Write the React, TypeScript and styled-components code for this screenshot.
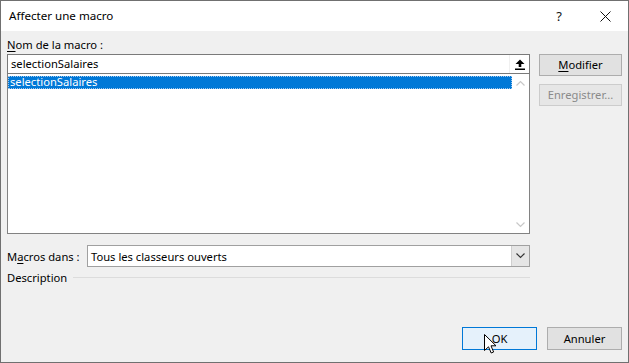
import React from 'react'
import styled, { createGlobalStyle } from 'styled-components'

const GlobalStyle = createGlobalStyle`
  html, body {
    margin: 0;
    padding: 0;
    background: #f0f0f0;
  }
  body {
    font-family: "Noto Sans", "Open Sans", sans-serif;
    font-size: 11.2px;
    color: #000;
  }
`

const Window = styled.div`
  position: relative;
  width: 629px;
  height: 363px;
  box-sizing: border-box;
  border: 1px solid #707070;
  display: flex;
  flex-direction: column;
  background: #f0f0f0;
  overflow: hidden;
`

const TitleBar = styled.div`
  height: 30px;
  background: #fff;
  display: flex;
  align-items: center;
  padding-left: 8px;
  flex-shrink: 0;
`

const Title = styled.div`
  flex: 1;
  font-size: 11.6px;
  line-height: 16px;
  margin-top: -1px;
`

const TitleButton = styled.div`
  width: 46px;
  height: 30px;
  display: flex;
  align-items: center;
  justify-content: center;
  font-size: 13px;
  color: #111;
`

const Body = styled.div`
  flex: 1;
  display: flex;
  flex-direction: column;
  padding: 6px 6px 12px 6px;
`

const TopRow = styled.div`
  display: flex;
  gap: 9px;
`

const LeftColumn = styled.div`
  width: 523px;
  display: flex;
  flex-direction: column;
`

const RightColumn = styled.div`
  width: 83px;
  padding-top: 17px;
  display: flex;
  flex-direction: column;
  gap: 8px;
`

const Label = styled.div`
  height: 17px;
  line-height: 15px;
  white-space: nowrap;
`

const TextBox = styled.div`
  height: 20px;
  box-sizing: border-box;
  border: 1px solid #7a7a7a;
  background: #fff;
  display: flex;
  align-items: center;
`

const TextValue = styled.div`
  flex: 1;
  padding-left: 3px;
  line-height: 16px;
`

const RefButton = styled.div`
  width: 19px;
  height: 18px;
  display: flex;
  align-items: center;
  justify-content: center;
  border-left: 1px solid #f0f0f0;
`

const ListBox = styled.div`
  height: 160px;
  box-sizing: border-box;
  border: 1px solid #828282;
  border-top: none;
  background: #fff;
  display: flex;
`

const ListItems = styled.div`
  flex: 1;
  padding-top: 2px;
`

const ListItem = styled.div<{ $selected?: boolean }>`
  height: 13px;
  line-height: 12px;
  padding-left: 2px;
  box-sizing: border-box;
  background: ${p => (p.$selected ? '#0078d7' : 'transparent')};
  color: ${p => (p.$selected ? '#fff' : '#000')};
  outline: ${p => (p.$selected ? '1px dotted #9ec7ee' : 'none')};
  outline-offset: -1px;
`

const ScrollBar = styled.div`
  width: 17px;
  display: flex;
  flex-direction: column;
  justify-content: space-between;
  align-items: center;
  padding: 6px 0 5px;
  box-sizing: border-box;
`

const Button = styled.div<{ $disabled?: boolean; $default?: boolean }>`
  height: 22px;
  box-sizing: border-box;
  display: flex;
  align-items: center;
  justify-content: center;
  border: 1px solid ${p => (p.$default ? '#0078d7' : p.$disabled ? '#cccccc' : '#adadad')};
  background: ${p => (p.$default ? '#e5f1fb' : p.$disabled ? '#e6e6e6' : '#e1e1e1')};
  color: ${p => (p.$disabled ? '#8a8a8a' : '#000')};
  line-height: 16px;
`

const MacrosRow = styled.div`
  margin-top: 11px;
  display: flex;
  align-items: center;
  width: 523px;
`

const MacrosLabel = styled.div`
  width: 80px;
  white-space: nowrap;
`

const Combo = styled.div`
  flex: 1;
  height: 22px;
  box-sizing: border-box;
  border: 1px solid #a0a0a0;
  background: #fff;
  display: flex;
  align-items: center;
`

const ComboValue = styled.div`
  flex: 1;
  padding-left: 3px;
`

const ComboButton = styled.div`
  width: 17px;
  height: 20px;
  background: #e5e5e5;
  border-left: 1px solid #cfcfcf;
  display: flex;
  align-items: center;
  justify-content: center;
`

const DescriptionRow = styled.div`
  margin-top: 2px;
  height: 16px;
  width: 523px;
  display: flex;
  align-items: center;
  gap: 6px;
`

const Rule = styled.div`
  flex: 1;
  height: 1px;
  background: #dcdcdc;
  margin-top: 1px;
`

const Footer = styled.div`
  margin-top: auto;
  display: flex;
  justify-content: flex-end;
  gap: 10px;
`

const FooterButton = styled(Button)`
  width: 75px;
  height: 23px;
`

const Cursor = styled.svg`
  position: absolute;
  left: 483px;
  top: 333px;
`

const U = styled.span`
  text-decoration: underline;
  text-underline-offset: 2px;
`

const Chevron = ({ up, color }: { up?: boolean; color: string }) => (
  <svg width="9" height="6" viewBox="0 0 9 6">
    <path
      d={up ? 'M0.5 5.5 L4.5 1.5 L8.5 5.5' : 'M0.5 0.5 L4.5 4.5 L8.5 0.5'}
      fill="none"
      stroke={color}
      strokeWidth="1.2"
    />
  </svg>
)

export default function App() {
  return (
    <>
      <GlobalStyle />
      <Window>
        <TitleBar>
          <Title>Affecter une macro</Title>
          <TitleButton>?</TitleButton>
          <TitleButton>
            <svg width="11" height="11" viewBox="0 0 11 11">
              <path d="M0.5 0.5 L10.5 10.5 M10.5 0.5 L0.5 10.5" stroke="#111" strokeWidth="1" />
            </svg>
          </TitleButton>
        </TitleBar>
        <Body>
          <TopRow>
            <LeftColumn>
              <Label>
                <U>N</U>om de la macro :
              </Label>
              <TextBox>
                <TextValue>selectionSalaires</TextValue>
                <RefButton>
                  <svg width="10" height="11" viewBox="0 0 10 11">
                    <path d="M5 0.5 L9.5 5 L6.3 5 L6.3 8 L3.7 8 L3.7 5 L0.5 5 Z" fill="#000" />
                    <rect x="0" y="9.5" width="10" height="1.5" fill="#000" />
                  </svg>
                </RefButton>
              </TextBox>
              <ListBox>
                <ListItems>
                  <ListItem $selected>selectionSalaires</ListItem>
                </ListItems>
                <ScrollBar>
                  <Chevron up color="#c8c8c8" />
                  <Chevron color="#c8c8c8" />
                </ScrollBar>
              </ListBox>
            </LeftColumn>
            <RightColumn>
              <Button>
                <span>
                  <U>M</U>odifier
                </span>
              </Button>
              <Button $disabled>Enregistrer...</Button>
            </RightColumn>
          </TopRow>
          <MacrosRow>
            <MacrosLabel>
              M<U>a</U>cros dans :
            </MacrosLabel>
            <Combo>
              <ComboValue>Tous les classeurs ouverts</ComboValue>
              <ComboButton>
                <Chevron color="#333" />
              </ComboButton>
            </Combo>
          </MacrosRow>
          <DescriptionRow>
            <span>Description</span>
            <Rule />
          </DescriptionRow>
          <Footer>
            <FooterButton $default>OK</FooterButton>
            <FooterButton>Annuler</FooterButton>
          </Footer>
        </Body>
        <Cursor width="13" height="20" viewBox="0 0 13 20">
          <path
            d="M0.5 0.5 L0.5 16.5 L4.5 12.8 L7.2 19 L9.6 18 L7 11.8 L12 11.8 Z"
            fill="#fff"
            stroke="#000"
            strokeWidth="1"
            strokeLinejoin="round"
          />
        </Cursor>
      </Window>
    </>
  )
}
